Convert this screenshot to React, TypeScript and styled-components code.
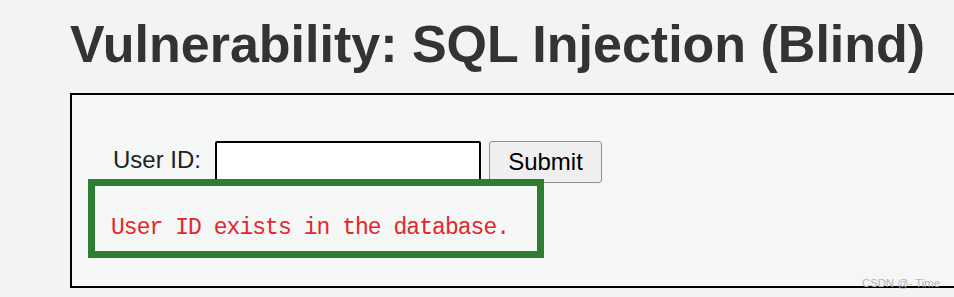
import styled, { createGlobalStyle } from "styled-components";

const GlobalStyle = createGlobalStyle`
  html, body {
    margin: 0;
    padding: 0;
    background: #f3f3f3;
    overflow: hidden;
  }
`;

const Page = styled.div`
  width: 954px;
  height: 297px;
  overflow: hidden;
  padding-left: 70px;
  box-sizing: border-box;
`;

const Title = styled.h1`
  margin: 0;
  padding-top: 14px;
  height: 93px;
  box-sizing: border-box;
  font-family: "Liberation Sans", Arial, sans-serif;
  font-weight: 700;
  font-size: 52px;
  line-height: 60px;
  color: #333333;
  white-space: nowrap;
`;

const Panel = styled.div`
  position: relative;
  width: 1000px;
  height: 195px;
  box-sizing: border-box;
  border: 2px solid #000;
  background: #f5f7f6;
  padding: 46px 0 0 41px;
`;

const FormRow = styled.div`
  display: flex;
  align-items: flex-start;
  height: 42px;
`;

const Label = styled.label`
  font-family: "Liberation Sans", Arial, sans-serif;
  font-size: 24px;
  color: #222;
  line-height: 38px;
  margin-right: 14px;
`;

const Input = styled.input`
  width: 266px;
  height: 42px;
  box-sizing: border-box;
  border: 2px solid #000;
  border-radius: 2px;
  background: #fff;
  margin: 0 8px 0 0;
`;

const Button = styled.button`
  width: 113px;
  height: 42px;
  box-sizing: border-box;
  border: 1px solid #8f8f8f;
  border-radius: 3px;
  background: #efefef;
  font-family: "Liberation Sans", Arial, sans-serif;
  font-size: 24px;
  color: #000;
  padding: 0;
`;

const Message = styled.pre`
  margin: 30px 0 0 -2px;
  font-family: "Liberation Mono", "Courier New", monospace;
  font-size: 23px;
  letter-spacing: -0.96px;
  line-height: 30px;
  color: #e3262b;
`;

const Highlight = styled.div`
  position: absolute;
  left: 16px;
  top: 84px;
  width: 456px;
  height: 79px;
  box-sizing: border-box;
  border: 7px solid #2f7d33;
`;

const Watermark = styled.span`
  position: absolute;
  left: 790px;
  top: 182px;
  font-family: "Liberation Sans", Arial, sans-serif;
  font-size: 11.3px;
  color: #b5b5b5;
`;

export default function App() {
  return (
    <>
      <GlobalStyle />
      <Page>
        <Title>Vulnerability: SQL Injection (Blind)</Title>
        <Panel>
          <FormRow>
            <Label>User ID:</Label>
            <Input type="text" />
            <Button>Submit</Button>
          </FormRow>
          <Message>User ID exists in the database.</Message>
          <Highlight />
          <Watermark>CSDN @- Time</Watermark>
        </Panel>
      </Page>
    </>
  );
}
